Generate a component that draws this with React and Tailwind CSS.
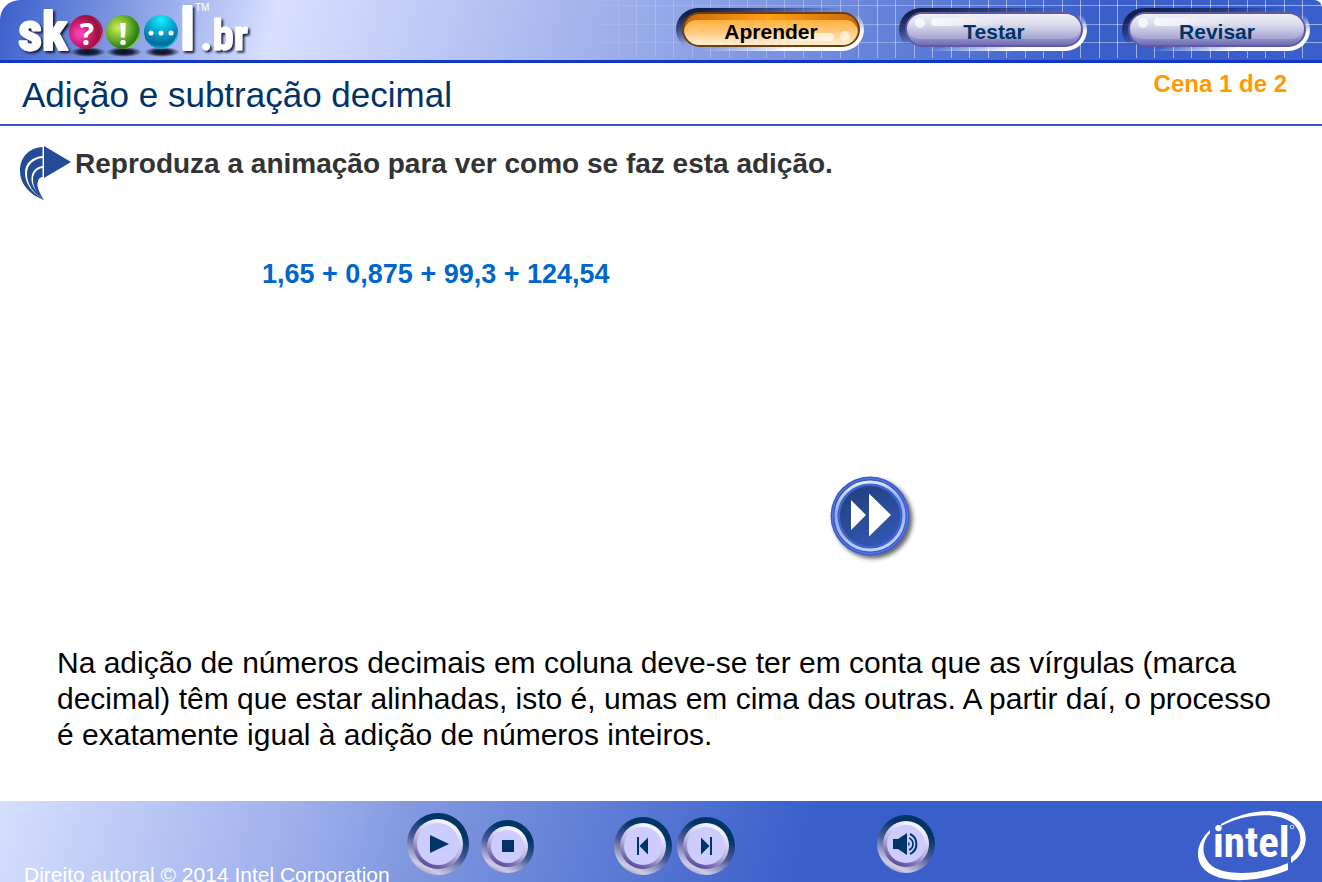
const tabs = [
  { label: "Aprender", active: true },
  { label: "Testar", active: false },
  { label: "Revisar", active: false },
];

const gridColumns = Array.from({ length: 38 }, (_, i) => Math.round(18.5 * (i + 1)) - 1);

function HeaderGrid() {
  return (
    <svg className="absolute inset-y-0 right-0 h-[60px] w-[722px]" viewBox="0 0 722 60" aria-hidden="true">
      <defs>
        <linearGradient id="gridFade" x1="0" x2="1" y1="0" y2="0">
          <stop offset="0" stopColor="#fff" stopOpacity="0.08" />
          <stop offset="0.5" stopColor="#fff" stopOpacity="0.35" />
          <stop offset="1" stopColor="#fff" stopOpacity="0.5" />
        </linearGradient>
      </defs>
      {gridColumns.map((x, i) => (
        <rect key={x} x={x} y="0" width="1" height="58" fill="#fff" opacity={0.12 + Math.min(i, 19) * 0.02} />
      ))}
      <rect x="0" y="5" width="722" height="1" fill="url(#gridFade)" />
      <rect x="0" y="24" width="722" height="1" fill="url(#gridFade)" />
      <rect x="0" y="42" width="722" height="1" fill="url(#gridFade)" />
    </svg>
  );
}

function SkoolLogo() {
  return (
    <svg
      className="relative h-[60px] w-[262px] shrink-0 overflow-visible"
      viewBox="0 0 262 60"
      role="img"
      aria-label="skoool.br"
    >
      <defs>
        <radialGradient id="pink" cx="0.32" cy="0.55" r="0.7">
          <stop offset="0" stopColor="#ff4fc8" />
          <stop offset="0.45" stopColor="#d01c70" />
          <stop offset="0.8" stopColor="#96143c" />
          <stop offset="1" stopColor="#c0206a" />
        </radialGradient>
        <radialGradient id="green" cx="0.35" cy="0.38" r="0.7">
          <stop offset="0" stopColor="#d4ee50" />
          <stop offset="0.5" stopColor="#6cb42c" />
          <stop offset="0.85" stopColor="#2e7a18" />
          <stop offset="1" stopColor="#58b020" />
        </radialGradient>
        <radialGradient id="cyan" cx="0.5" cy="0.15" r="0.85">
          <stop offset="0" stopColor="#18f0ff" />
          <stop offset="0.45" stopColor="#08a4d0" />
          <stop offset="0.85" stopColor="#066a9c" />
          <stop offset="1" stopColor="#08b4dc" />
        </radialGradient>
        <radialGradient id="ground">
          <stop offset="0" stopColor="#0a0c20" />
          <stop offset="0.5" stopColor="#0a0c20" stopOpacity="0.85" />
          <stop offset="1" stopColor="#0a0c20" stopOpacity="0" />
        </radialGradient>
        <filter id="letterShadow" x="-10%" y="-10%" width="130%" height="130%">
          <feDropShadow dx="2" dy="2" stdDeviation="0.8" floodColor="#0c1434" floodOpacity="0.95" />
        </filter>
      </defs>
      <ellipse cx="88" cy="52" rx="18" ry="5" fill="url(#ground)" />
      <ellipse cx="124" cy="52" rx="18" ry="5" fill="url(#ground)" />
      <ellipse cx="162" cy="52" rx="18" ry="5" fill="url(#ground)" />
      <circle cx="86" cy="32" r="17" fill="url(#pink)" />
      <circle cx="123" cy="32" r="17" fill="url(#green)" />
      <circle cx="161" cy="32" r="17" fill="url(#cyan)" />
      <path d="M102.500 31 A17 17 0 0 1 90 48.500 A20 20 0 0 0 102.500 31Z" fill="#ff70d8" />
      <path d="M139.500 31 A17 17 0 0 1 126 48.500 A20 20 0 0 0 139.500 31Z" fill="#a8f830" />
      <path d="M177.500 31 A17 17 0 0 1 164 48.500 A20 20 0 0 0 177.500 31Z" fill="#30f4ff" />
      <g fill="#fff" fontWeight="700" textAnchor="middle" fontFamily="'Open Sans', 'Noto Sans', sans-serif">
        <text x="87" y="45" fontSize="30">?</text>
        <text x="123" y="45" fontSize="31">!</text>
      </g>
      <g fill="#fff">
        <circle cx="151" cy="33" r="2.500" />
        <circle cx="161" cy="33" r="2.500" />
        <circle cx="171" cy="33" r="2.500" />
      </g>
      <g
        fill="#fff"
        stroke="#fff"
        strokeWidth="2"
        strokeLinejoin="round"
        fontWeight="700"
        filter="url(#letterShadow)"
        fontFamily="'Roboto Condensed', 'Open Sans Condensed', 'Liberation Sans Narrow', Lato, sans-serif"
      >
        <text x="18" y="50" fontSize="53">sk</text>
        <text x="180" y="50" fontSize="59">l</text>
        <text x="200" y="50" fontSize="43" strokeWidth="1">
          .br
        </text>
      </g>
      <text x="195" y="11" fontSize="10" fill="#fff" fontFamily="'Liberation Sans', sans-serif">TM</text>
    </svg>
  );
}

function TabButton({ label, active }) {
  return (
    <button
      type="button"
      aria-pressed={active}
      className="h-[43px] w-[188px] rounded-full bg-[linear-gradient(167deg,#141f4c_10%,#141f4c99_28%,#ffffff00_46%,#ffffff00_56%,#ffffff_78%)] pt-1 pr-1 pb-1 pl-[6px]"
    >
      <span
        className={
          active
            ? "relative flex h-[35px] items-center justify-center overflow-hidden rounded-full border-2 border-[#6b4010] bg-[linear-gradient(90deg,#c8690c,#ffa018_48%,#c8690c)] text-[21px] font-bold text-black"
            : "relative flex h-[35px] items-center justify-center overflow-hidden rounded-full border-2 border-[#6058a8] bg-[linear-gradient(180deg,#d8d8ea,#b0afd8_60%,#6f6cb4)] text-[21px] font-bold text-[#003366]"
        }
      >
        <span
          className={
            active
              ? "absolute inset-x-0 top-[6px] bottom-0 rounded-full bg-[linear-gradient(180deg,#ffb03c,#ffc878_45%,#fff0d4)]"
              : "absolute inset-x-0 top-0 bottom-[6px] rounded-full bg-[linear-gradient(180deg,#f0f0f6,#dcdcec_40%,#a5a3d2)]"
          }
        />
        <span
          className={
            active
              ? "absolute right-6 bottom-1 h-2 w-16 rounded-full bg-linear-to-l from-white/70 to-white/10"
              : "absolute top-1 left-6 h-2 w-18 rounded-full bg-linear-to-r from-white/80 to-white/0"
          }
        />
        <span
          className={
            active
              ? "absolute right-2 bottom-1 size-[10px] rounded-full bg-white/60"
              : "absolute top-1 left-2 size-[10px] rounded-full bg-white/70"
          }
        />
        <span className="relative pt-1">{label}</span>
      </span>
    </button>
  );
}

function ArcArrow() {
  return (
    <svg className="h-[54px] w-[52px] shrink-0" viewBox="0 0 52 54" fill="#254a96" aria-hidden="true">
      <path d="M22.500 1 C8 2 0 12 0 25 C0 38 10 49 24 54 C11 46 5 37 5 27 C5 17 12 11 22.500 10Z" />
      <path d="M22.500 12 C13 13 7 19 7 28 C7 38 13 47 24 54 C15 45 11 38 11.500 32 C12 25 16 21 22.500 20Z" />
      <path d="M22.500 22 C16 23 13 28 13 34 C13 41 17 48 24 54 C19 46 17 41 17.500 37 C18 33 20 31 22.500 31Z" />
      <path d="M24 0 L51 16 L24 32Z" />
    </svg>
  );
}

function ForwardButton() {
  return (
    <button type="button" aria-label="Avançar" className="block size-[88px]">
      <svg className="size-[88px]" viewBox="0 0 88 88" aria-hidden="true">
        <defs>
          <linearGradient id="ringOuter" x1="0" y1="0" x2="1" y2="1">
            <stop offset="0" stopColor="#3558bd" />
            <stop offset="1" stopColor="#3b62d2" />
          </linearGradient>
          <linearGradient id="ringLight" x1="0.300" y1="0" x2="0.500" y2="1">
            <stop offset="0" stopColor="#e8edff" />
            <stop offset="0.4" stopColor="#8fa6f0" />
            <stop offset="1" stopColor="#c4d0fc" />
          </linearGradient>
          <linearGradient id="face" x1="0.200" y1="0" x2="0.700" y2="1">
            <stop offset="0" stopColor="#23407e" />
            <stop offset="1" stopColor="#3158b4" />
          </linearGradient>
          <filter id="roundShadow" x="-20%" y="-20%" width="150%" height="150%">
            <feDropShadow dx="3" dy="3" stdDeviation="2" floodColor="#333" floodOpacity="0.75" />
          </filter>
        </defs>
        <circle cx="40" cy="40" r="39.500" fill="url(#ringOuter)" filter="url(#roundShadow)" />
        <circle cx="40" cy="40" r="37.500" fill="none" stroke="#5c7ee0" strokeWidth="1" />
        <circle cx="40" cy="40" r="34" fill="#3d63cc" stroke="url(#ringLight)" strokeWidth="3" />
        <circle cx="40" cy="40" r="30" fill="url(#face)" />
        <path d="M21 24 L36 39 L21 54Z M39 17.500 L61 39 L39 60.500Z" fill="#fff" />
      </svg>
    </button>
  );
}

function PlayerButton({ label, sizeClass, children }) {
  return (
    <button
      type="button"
      aria-label={label}
      className={
        "shrink-0 rounded-full bg-[linear-gradient(205deg,#003366_28%,#4a5a98_55%,#d0cce4_82%,#6a62a0)] p-[6px] " + sizeClass
      }
    >
      <span className="block size-full rounded-full bg-[linear-gradient(205deg,#f4f2fc_18%,#b8b2dc_55%,#5f539f_85%)] p-1">
        <span className="flex size-full items-center justify-center rounded-full bg-[#ccccff]">{children}</span>
      </span>
    </button>
  );
}

function Glyph({ children }) {
  return (
    <svg className="size-[30px] shrink-0" viewBox="0 0 30 30" fill="#003366" aria-hidden="true">
      {children}
    </svg>
  );
}

function IntelLogo() {
  return (
    <svg className="h-[72px] w-[108px]" viewBox="0 0 108 72" role="img" aria-label="intel">
      <path
        d="M23 15 C45 2 78 -3 96 8 C114 21 110 43 93 54 L93 48 C105 38 106 22 93 13 C77 2 46 5 23 17Z"
        fill="#fff"
      />
      <path
        d="M12 21 C-2 34 -4 51 7 61 C23 76 62 73 90 61 L90 54 C66 65 29 68 14 57 C4 49 2 35 12 24Z"
        fill="#fff"
      />
      <text
        x="15"
        y="48"
        fontSize="43"
        fontWeight="700"
        fill="#fff"
        fontFamily="'Roboto Condensed', 'Liberation Sans Narrow', 'Open Sans', sans-serif"
      >
        intel
      </text>
      <circle cx="94" cy="18" r="1.800" fill="none" stroke="#fff" strokeWidth="0.800" />
    </svg>
  );
}

export default function App() {
  return (
    <div className="flex min-h-screen flex-col bg-white font-['Liberation_Sans',Arial,sans-serif]">
      <header className="relative flex items-start justify-between rounded-tl-[20px] rounded-tr-[8px] border-b-3 border-[#1036c8] bg-[linear-gradient(105deg,#3a5fcb_0%,#d9e0ff_21%,#9aace9_48%,#3a5fcb_82%)]">
        <HeaderGrid />
        <SkoolLogo />
        <nav className="relative flex gap-[35px] pt-2 pr-3" aria-label="Seções">
          {tabs.map((tab) => (
            <TabButton key={tab.label} label={tab.label} active={tab.active} />
          ))}
        </nav>
      </header>

      <div className="flex h-[63px] items-start justify-between border-b-2 border-[#3a58c4] pr-[35px] pl-[22px]">
        <h1 className="pt-3 text-[35px] leading-10 text-[#003366]">Adição e subtração decimal</h1>
        <p className="pt-[5px] text-2xl font-bold text-[#ff9900]">Cena 1 de 2</p>
      </div>

      <main className="flex flex-1 flex-col">
        <div className="flex items-start gap-[3px] pt-5 pl-5">
          <ArcArrow />
          <h2 className="text-[28px] leading-9 font-bold text-[#333333]">
            Reproduza a animação para ver como se faz esta adição.
          </h2>
        </div>
        <p className="pt-14 pl-[262px] text-[27px] leading-9 font-bold text-[#0066cc]">1,65 + 0,875 + 99,3 + 124,54</p>
        <div className="pt-[184px] pl-[830px]">
          <ForwardButton />
        </div>
        <p className="mt-auto pr-10 pb-12 pl-[57px] text-[30px] leading-9 text-black">
          Na adição de números decimais em coluna deve-se ter em conta que as vírgulas (marca decimal) têm que estar
          alinhadas, isto é, umas em cima das outras. A partir daí, o processo é exatamente igual à adição de números
          inteiros.
        </p>
      </main>

      <footer className="flex h-[81px] items-start overflow-hidden bg-[linear-gradient(105deg,#d5dffd_0%,#a0b0ec_22%,#7f97df_32%,#3a5fcb_61%)] pr-4">
        <p className="w-[383px] shrink-0 pt-[62px] pl-6 text-[21px] leading-6 whitespace-nowrap text-white">
          Direito autoral © 2014 Intel Corporation
        </p>
        <div className="flex items-center pt-3 pl-6">
          <PlayerButton label="Reproduzir" sizeClass="size-[62px]">
            <Glyph>
              <path d="M7 6 L26 15 L7 24Z" />
            </Glyph>
          </PlayerButton>
          <div className="pt-1 pl-3">
            <PlayerButton label="Parar" sizeClass="size-[53px]">
              <Glyph>
                <path d="M9 9h12v12H9Z" />
              </Glyph>
            </PlayerButton>
          </div>
          <div className="flex gap-[5px] pt-1 pl-20">
            <PlayerButton label="Anterior" sizeClass="size-[58px]">
              <Glyph>
                <path d="M9 6h2v18H9Z M20 6.500V23.500L11.500 15Z" />
              </Glyph>
            </PlayerButton>
            <PlayerButton label="Próximo" sizeClass="size-[58px]">
              <Glyph>
                <path d="M19 6h2v18H19Z M10 6.500V23.500L18.500 15Z" />
              </Glyph>
            </PlayerButton>
          </div>
          <div className="pl-[142px]">
            <PlayerButton label="Som" sizeClass="size-[58px]">
              <Glyph>
                <path d="M2 10h5L16 4V26L7 20H2Z" />
                <path d="M17 13 A2 2 0 0 1 17 17Z" opacity="0.7" />
                <path d="M18 9 A6.500 6.500 0 0 1 18 21" fill="none" stroke="#003366" strokeWidth="1.700" />
                <path d="M19 5 A11 11 0 0 1 19 25" fill="none" stroke="#003366" strokeWidth="2" />
              </Glyph>
            </PlayerButton>
          </div>
        </div>
        <div className="ml-auto pt-2">
          <IntelLogo />
        </div>
      </footer>
    </div>
  );
}
